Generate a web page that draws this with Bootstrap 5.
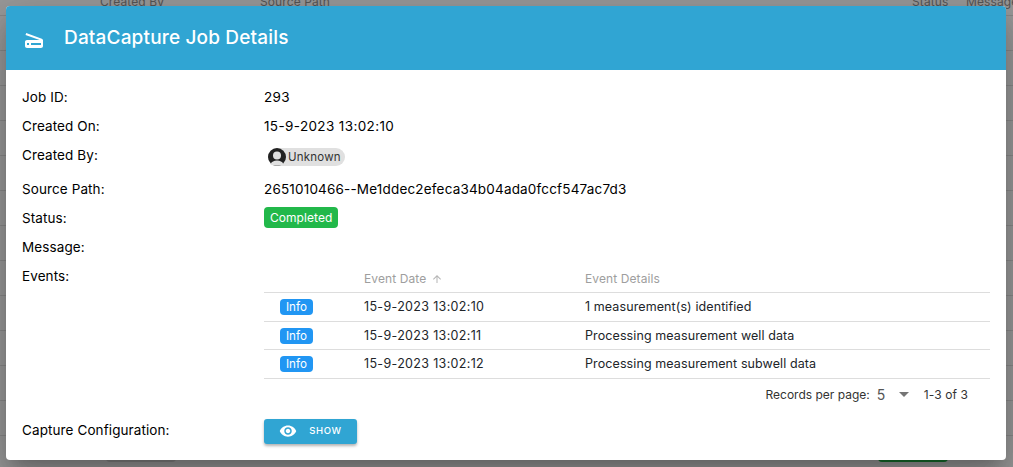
<!DOCTYPE html>
<html lang="en"><head><meta charset="utf-8">
<link href="https://cdn.jsdelivr.net/npm/bootstrap@5.3.0/dist/css/bootstrap.min.css" rel="stylesheet">
<style>
html,body{height:467px;overflow:hidden}
body{background:#999;font-family:Inter,"Liberation Sans",sans-serif;font-size:13.5px;letter-spacing:.1px;color:#000}
.backdrop{height:467px;overflow:hidden;position:relative;background:repeating-linear-gradient(to bottom,#999 0,#999 15px,#888 15px,#888 16px,#999 16px,#999 35px)}
.behind{display:grid;grid-template-columns:100px 160px 652px 54px auto;height:6px;margin-top:-5px;color:#555;font-size:12px;line-height:14px;background:#999}
.behind span{white-space:nowrap}
.grnbit,.grybit{position:absolute;top:452px;height:10px;border-radius:4px}
.grnbit{left:878px;width:70px;background:#156f2c}
.grybit{left:106px;width:70px;background:#868686}
.dlg{position:absolute;left:6px;top:6px;width:1000px;height:454px;background:#fff;border-radius:4px;box-shadow:0 11px 15px -7px rgba(0,0,0,.2),0 24px 38px 3px rgba(0,0,0,.14),0 9px 46px 8px rgba(0,0,0,.12);overflow:hidden}
.dhead{height:64px;background:#30a5d3;color:#fff;padding:1px 0 0 16px;gap:18px}
.dhead svg{margin-top:3px}
.dhead h1{font-size:19px;font-weight:500;margin:0;letter-spacing:.17px;font-family:Inter,sans-serif}
.dbody{padding:12px 16px}
.lbl{width:242px;flex:none}
.frow{line-height:19px;padding-top:6px;box-sizing:content-box;height:23px}
.numv{letter-spacing:.37px}
.pathv{letter-spacing:.18px}
.chiprow{height:28px;line-height:19px;padding-top:6px;box-sizing:content-box}
.chipx{background:#e0e0e0;height:18px;border-radius:9px;font-size:11.5px;line-height:18px;padding-right:4px;color:#333;margin:2px 0 0 4px;gap:2px;letter-spacing:.2px}
.st{background:#22b84a;color:#fff;border-radius:4px;font-size:12px;line-height:21px;height:21px;padding:0 6px;margin-top:-2px;letter-spacing:.05px}
.tblw{width:726px}
.evt{table-layout:fixed;width:726px;margin:0;font-size:12.5px;--bs-table-bg:transparent}
.evt th{font-weight:400;color:#9e9e9e;font-size:12px;height:25px;padding:0 0 2px;vertical-align:middle;border-bottom:1px solid #ddd}
.evt th svg{margin-left:1px}
.evt td{height:29px;padding:0;vertical-align:middle;border-bottom:1px solid #ddd}
.evt tbody tr:nth-child(2) td{height:28px}
.evt .dt{letter-spacing:.33px}
.inf{display:inline-block;background:#2196f3;color:#fff;border-radius:4px;font-size:11.6px;line-height:16px;height:16px;padding:0 6px;margin-left:16px;letter-spacing:0}
.pager{height:31px;font-size:12px;color:#333;padding-right:22px;gap:8px;letter-spacing:.1px}
.pager .rp{letter-spacing:0}
.five{font-size:14px;color:#555;width:14px;margin-left:-1px}
.tri{width:0;height:0;border-left:5px solid transparent;border-right:5px solid transparent;border-top:5px solid #757575;margin-right:7px}
.shw{background:#30a5d3;color:#fff;border:0;border-radius:3px;width:93px;height:25px;font-size:9.5px;font-weight:500;letter-spacing:.6px;box-shadow:0 2px 3px rgba(0,0,0,.3);gap:12px;padding:0}
.cfg{margin-top:9px}
.cfg .lbl{margin-bottom:2px}
</style></head><body>
<div class="backdrop">
<div class="behind"><span></span><span>Created By</span><span>Source Path</span><span>Status</span><span>Message</span></div>
<div class="grybit"></div><div class="grnbit"></div>
<div class="dlg">
<div class="dhead d-flex align-items-center">
<svg width="24" height="24" viewBox="0 0 24 24" fill="#fff"><path d="M19.8 10.700 4.200 5 3.500 6.900 17.600 12H5c-1.100 0-2 .9-2 2v4c0 1.100.9 2 2 2h14c1.100 0 2-.9 2-2v-5.500c0-.8-.5-1.600-1.200-1.800zM7 17H5v-2h2v2zm12 0H9v-2h10v2z"/></svg>
<h1>DataCapture Job Details</h1>
</div>
<div class="dbody">
<div class="d-flex frow"><div class="lbl">Job ID:</div><div class="numv">293</div></div>
<div class="d-flex frow"><div class="lbl">Created On:</div><div class="numv">15-9-2023 13:02:10</div></div>
<div class="d-flex chiprow"><div class="lbl">Created By:</div><div><div class="chipx d-inline-flex align-items-center"><svg width="18" height="18" viewBox="0 0 18 18"><circle cx="9" cy="9" r="9" fill="#222"/><circle cx="9" cy="7.500" r="4" fill="#e0e0e0"/><path d="M2.500 16.500c1-3 3.500-4 6.500-4s5.500 1 6.500 4c-1.500 1.500-11.500 1.500-13 0z" fill="#e0e0e0"/></svg>Unknown</div></div></div>
<div class="d-flex frow"><div class="lbl">Source Path:</div><div class="pathv">2651010466--Me1ddec2efeca34b04ada0fccf547ac7d3</div></div>
<div class="d-flex frow"><div class="lbl">Status:</div><div><span class="st d-block">Completed</span></div></div>
<div class="d-flex frow"><div class="lbl">Message:</div><div></div></div>
<div class="d-flex" style="line-height:19px;padding-top:6px"><div class="lbl">Events:</div>
<div class="tblw">
<table class="table evt"><colgroup><col style="width:100px"><col style="width:221px"><col></colgroup>
<thead><tr><th></th><th>Event Date <svg width="12" height="12" viewBox="0 0 24 24" fill="#b5b5b5"><path d="M4 12l1.400 1.400L11 7.800V20h2V7.800l5.600 5.600L20 12l-8-8z"/></svg></th><th>Event Details</th></tr></thead>
<tbody>
<tr><td><span class="inf">Info</span></td><td class="dt">15-9-2023 13:02:10</td><td>1 measurement(s) identified</td></tr>
<tr><td><span class="inf">Info</span></td><td class="dt">15-9-2023 13:02:11</td><td>Processing measurement well data</td></tr>
<tr><td><span class="inf">Info</span></td><td class="dt">15-9-2023 13:02:12</td><td>Processing measurement subwell data</td></tr>
</tbody></table>
<div class="pager d-flex align-items-center justify-content-end"><span class="rp">Records per page:</span><span class="five">5</span><span class="tri"></span><span>1-3 of 3</span></div>
</div></div>
<div class="d-flex align-items-center cfg"><div class="lbl">Capture Configuration:</div>
<button class="shw d-flex align-items-center justify-content-center"><svg width="18" height="18" viewBox="0 0 24 24" fill="#fff"><path d="M12 4.500C7 4.500 2.700 7.600 1 12c1.700 4.400 6 7.500 11 7.500s9.300-3.100 11-7.500c-1.700-4.400-6-7.500-11-7.500zM12 17c-2.800 0-5-2.200-5-5s2.200-5 5-5 5 2.200 5 5-2.200 5-5 5zm0-8c-1.700 0-3 1.300-3 3s1.300 3 3 3 3-1.300 3-3-1.300-3-3-3z"/></svg><span>SHOW</span></button></div>
</div>
</div>
</div>
</body></html>
